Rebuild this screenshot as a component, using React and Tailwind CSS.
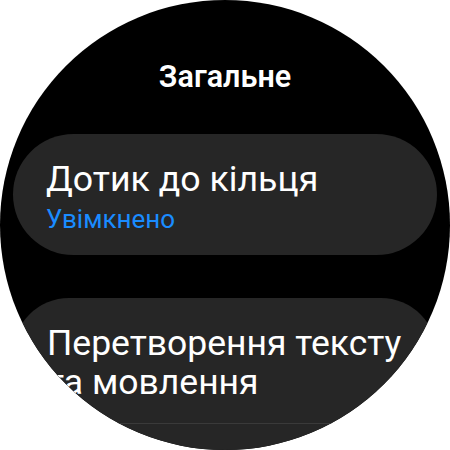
export default function App() {
  return (
    <div className="w-[450px] h-[450px] bg-white" style={{ fontFamily: "Roboto, 'Noto Sans', sans-serif" }}>
      <div className="w-[450px] h-[450px] rounded-full bg-black overflow-hidden flex flex-col items-center">
        <div className="mt-[59px] h-[36px] flex items-center text-white text-[30.5px] font-semibold leading-[36px]">
          Загальне
        </div>
        <div className="mt-[39px] w-[424px] h-[121px] shrink-0 rounded-full bg-[#262626] pl-[33px] flex flex-col justify-center">
          <div className="text-white text-[35.7px] leading-[40px] mt-[4px]">Дотик до кільця</div>
          <div className="text-[#1a8cff] text-[26px] leading-[32px] mt-[4px]">Увімкнено</div>
        </div>
        <div className="mt-[43px] w-[424px] shrink-0 rounded-t-[56px] bg-[#262626] flex flex-col">
          <div className="pl-[34px] pr-[10px] pt-[26px] pb-[21px] text-white text-[35.5px] leading-[39px]">
            Перетворення тексту
            <br />
            та мовлення
          </div>
          <div className="h-px bg-[#3a3a3a]" />
          <div className="h-[80px]" />
        </div>
      </div>
    </div>
  );
}
